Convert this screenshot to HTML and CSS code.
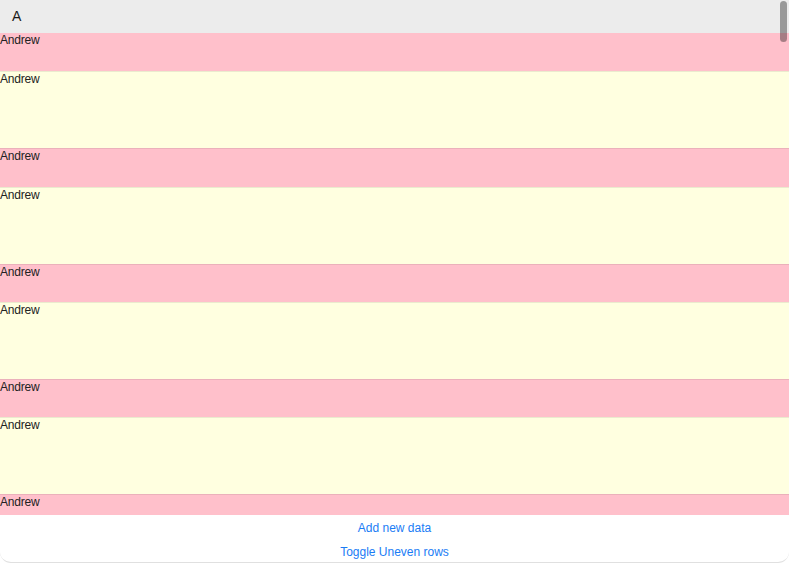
FILE: index.html
```html
<!DOCTYPE html>
<html>
<head>
<meta charset="utf-8">
<link rel="stylesheet" href="styles.css">
</head>
<body>
<div class="window">
  <div class="scroll">
    <div class="header">A</div>
    <div class="list">
      <div class="row even">Andrew</div>
      <div class="row odd">Andrew</div>
      <div class="row even">Andrew</div>
      <div class="row odd">Andrew</div>
      <div class="row even">Andrew</div>
      <div class="row odd">Andrew</div>
      <div class="row even">Andrew</div>
      <div class="row odd">Andrew</div>
      <div class="row even">Andrew</div>
    </div>
    <div class="scrollbar"></div>
  </div>
  <div class="actions">
    <button class="link">Add new data</button>
    <button class="link">Toggle Uneven rows</button>
  </div>
</div>
</body>
</html>
```
FILE: styles.css
```css
html, body {
  margin: 0;
  padding: 0;
  background: #ffffff;
}
.window {
  width: 789px;
  height: 563px;
  box-sizing: border-box;
  display: flex;
  flex-direction: column;
  background: #ffffff;
  border-radius: 0 0 11px 11px;
  border-bottom: 1px solid rgba(0,0,0,0.12);
  overflow: hidden;
  font-family: "Liberation Sans", Arial, sans-serif;
}
.scroll {
  position: relative;
  height: 515px;
  overflow: hidden;
  flex: none;
}
.header {
  height: 33px;
  background: #ececec;
  font-size: 14px;
  color: #1a1a1a;
  padding-left: 12px;
  line-height: 32px;
  box-sizing: border-box;
}
.list {
  display: flex;
  flex-direction: column;
}
.row {
  flex: none;
  box-sizing: border-box;
  font-size: 12px;
  letter-spacing: -0.2px;
  line-height: 13px;
  color: #222222;
  padding-top: 1px;
  border-top: 1px solid rgba(0,0,0,0.08);
}
.row:first-child {
  border-top: none;
}
.even {
  background: #ffc0cb;
  height: 38.25px;
}
.odd {
  background: #ffffe0;
  height: 77px;
}
.scrollbar {
  position: absolute;
  top: 1px;
  right: 2px;
  width: 7px;
  height: 41px;
  border-radius: 4px;
  background: rgba(0,0,0,0.35);
}
.actions {
  flex: 1;
  display: flex;
  flex-direction: column;
  align-items: center;
  padding-top: 5px;
  gap: 8px;
}
.link {
  border: none;
  background: none;
  padding: 0;
  font-family: "Liberation Sans", Arial, sans-serif;
  font-size: 12px;
  line-height: 16px;
  color: #1a7cf5;
  cursor: pointer;
}
```
